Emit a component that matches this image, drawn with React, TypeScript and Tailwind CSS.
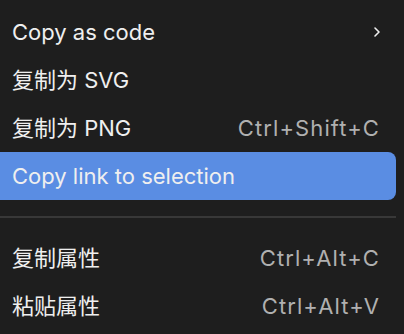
import { ChevronRight } from "lucide-react";

interface ItemProps {
  label: string;
  shortcut?: string;
  submenu?: boolean;
  active?: boolean;
}

function MenuItem({ label, shortcut, submenu, active }: ItemProps) {
  return (
    <div
      className={`flex h-12 items-center justify-between rounded-lg pl-5 pr-4 ${
        active ? "bg-[#5a8de3]" : ""
      }`}
    >
      <span className="text-[#efefef]">{label}</span>
      {shortcut && <span className="tracking-[1.1px] text-[#b0b0b0]">{shortcut}</span>}
      {submenu && <ChevronRight size={16} strokeWidth={2.4} className="mr-[-5px] text-[#efefef]" />}
    </div>
  );
}

export default function App() {
  return (
    <div
      className="h-[334px] w-[404px] overflow-hidden bg-[#1e1e1e] text-[22px]"
      style={{ fontFamily: 'Inter, "Noto Sans CJK SC", sans-serif' }}
    >
      <div className="ml-[-8px] mr-2 pt-2">
        <MenuItem label="Copy as code" submenu />
        <MenuItem label="复制为 SVG" />
        <MenuItem label="复制为 PNG" shortcut="Ctrl+Shift+C" />
        <MenuItem label="Copy link to selection" active />
        <div className="mb-4 mt-4 h-[2px] bg-[#383838]" />
        <MenuItem label="复制属性" shortcut="Ctrl+Alt+C" />
        <MenuItem label="粘贴属性" shortcut="Ctrl+Alt+V" />
      </div>
    </div>
  );
}
